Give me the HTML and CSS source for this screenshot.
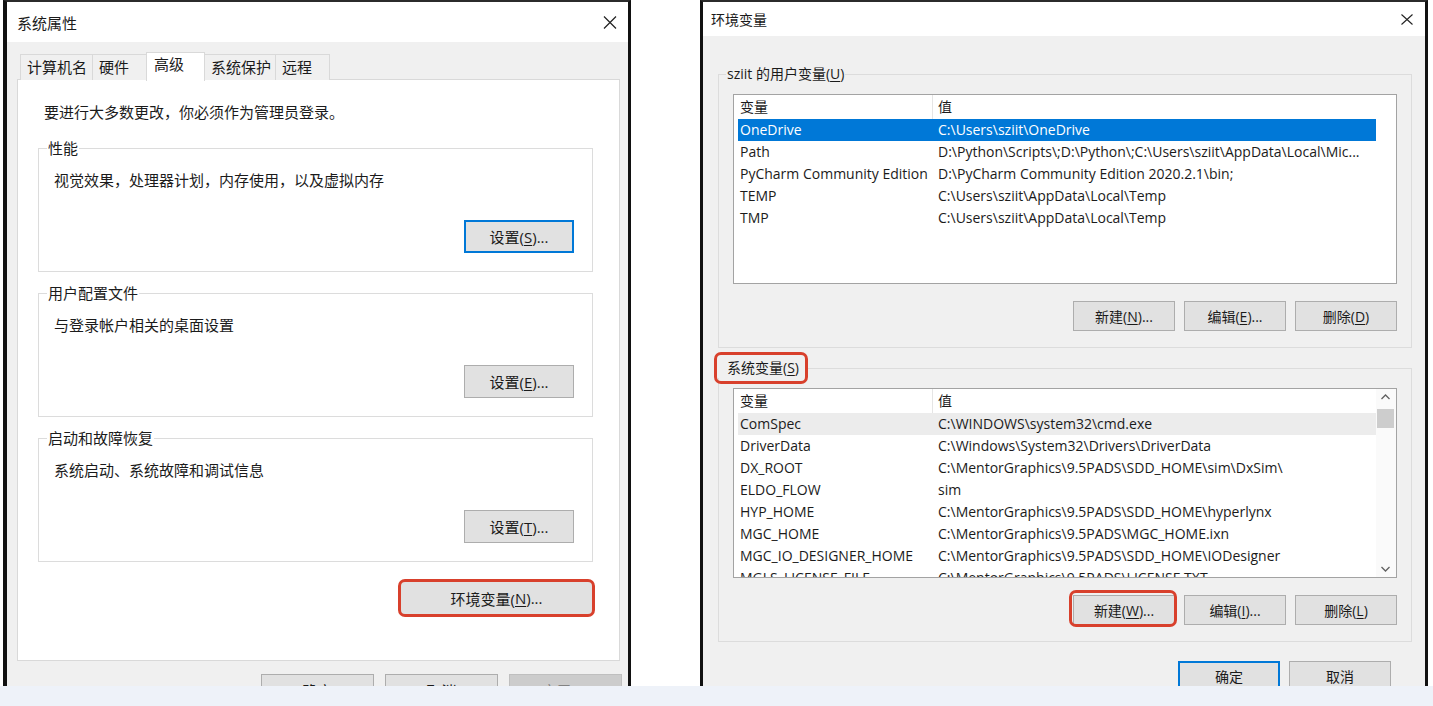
FILE: index.html
```html
<!DOCTYPE html>
<html lang="zh-CN">
<head>
<meta charset="utf-8">
<title>系统属性 / 环境变量</title>
<link rel="stylesheet" href="styles.css">
</head>
<body>
<div class="stage">
  <section class="dlg dlg-sys">
    <header class="titlebar">
      <span class="title">系统属性</span>
      <svg class="close" width="14" height="13" viewBox="0 0 14 13"><path d="M1 0.5 L13 12.5 M13 0.5 L1 12.5" stroke="#222" stroke-width="1.2" fill="none"/></svg>
    </header>
    <div class="body">
      <div class="tabs">
        <span class="tab">计算机名</span>
        <span class="tab">硬件</span>
        <span class="tab tab-on">高级</span>
        <span class="tab">系统保护</span>
        <span class="tab">远程</span>
      </div>
      <div class="panel">
        <p class="msg">要进行大多数更改，你必须作为管理员登录。</p>
        <fieldset class="grp">
          <legend>性能</legend>
          <p class="desc">视觉效果，处理器计划，内存使用，以及虚拟内存</p>
          <div class="grp-actions"><button class="btn btn-set btn-focus">设置(<u>S</u>)...</button></div>
        </fieldset>
        <fieldset class="grp">
          <legend>用户配置文件</legend>
          <p class="desc">与登录帐户相关的桌面设置</p>
          <div class="grp-actions"><button class="btn btn-set">设置(<u>E</u>)...</button></div>
        </fieldset>
        <fieldset class="grp">
          <legend>启动和故障恢复</legend>
          <p class="desc">系统启动、系统故障和调试信息</p>
          <div class="grp-actions"><button class="btn btn-set">设置(<u>T</u>)...</button></div>
        </fieldset>
        <div class="env-row">
          <button class="btn btn-env hl hl-env">环境变量(<u>N</u>)...</button>
        </div>
      </div>
      <div class="footer footer-sys">
        <button class="btn btn-foot">确定</button>
        <button class="btn btn-foot">取消</button>
        <button class="btn btn-foot btn-disabled">应用(<u>A</u>)</button>
      </div>
    </div>
  </section>

  <section class="dlg dlg-env">
    <header class="titlebar">
      <span class="title">环境变量</span>
      <svg class="close" width="12" height="11" viewBox="0 0 12 11"><path d="M0.5 0.5 L11.5 10.5 M11.5 0.5 L0.5 10.5" stroke="#222" stroke-width="1.1" fill="none"/></svg>
    </header>
    <div class="body body-env">
      <fieldset class="egrp">
        <legend>sziit 的用户变量(<u>U</u>)</legend>
        <div class="list">
          <div class="list-main">
            <div class="lrow lhead"><span class="c1">变量</span><span class="c2">值</span></div>
            <div class="lrow sel"><span class="c1">OneDrive</span><span class="c2">C:\Users\sziit\OneDrive</span></div>
            <div class="lrow"><span class="c1">Path</span><span class="c2">D:\Python\Scripts\;D:\Python\;C:\Users\sziit\AppData\Local\Mic...</span></div>
            <div class="lrow"><span class="c1">PyCharm Community Edition</span><span class="c2">D:\PyCharm Community Edition 2020.2.1\bin;</span></div>
            <div class="lrow"><span class="c1">TEMP</span><span class="c2">C:\Users\sziit\AppData\Local\Temp</span></div>
            <div class="lrow"><span class="c1">TMP</span><span class="c2">C:\Users\sziit\AppData\Local\Temp</span></div>
          </div>
          <div class="vscroll vscroll-empty"></div>
        </div>
        <div class="egrp-actions">
          <button class="btn btn-e">新建(<u>N</u>)...</button>
          <button class="btn btn-e">编辑(<u>E</u>)...</button>
          <button class="btn btn-e">删除(<u>D</u>)</button>
        </div>
      </fieldset>

      <fieldset class="egrp egrp-sys">
        <legend class="hl hl-legend">系统变量(<u>S</u>)</legend>
        <div class="list">
          <div class="list-main">
            <div class="lrow lhead"><span class="c1">变量</span><span class="c2">值</span></div>
            <div class="lrow hov"><span class="c1">ComSpec</span><span class="c2">C:\WINDOWS\system32\cmd.exe</span></div>
            <div class="lrow"><span class="c1">DriverData</span><span class="c2">C:\Windows\System32\Drivers\DriverData</span></div>
            <div class="lrow"><span class="c1">DX_ROOT</span><span class="c2">C:\MentorGraphics\9.5PADS\SDD_HOME\sim\DxSim\</span></div>
            <div class="lrow"><span class="c1">ELDO_FLOW</span><span class="c2">sim</span></div>
            <div class="lrow"><span class="c1">HYP_HOME</span><span class="c2">C:\MentorGraphics\9.5PADS\SDD_HOME\hyperlynx</span></div>
            <div class="lrow"><span class="c1">MGC_HOME</span><span class="c2">C:\MentorGraphics\9.5PADS\MGC_HOME.ixn</span></div>
            <div class="lrow"><span class="c1">MGC_IO_DESIGNER_HOME</span><span class="c2">C:\MentorGraphics\9.5PADS\SDD_HOME\IODesigner</span></div>
            <div class="lrow"><span class="c1">MGLS_LICENSE_FILE</span><span class="c2">C:\MentorGraphics\9.5PADS\LICENSE.TXT</span></div>
          </div>
          <div class="vscroll">
            <svg class="arrow" width="19" height="17" viewBox="0 0 19 17"><path d="M5.5 10 L9.5 6 L13.5 10" stroke="#606060" stroke-width="1.3" fill="none"/></svg>
            <div class="thumb"></div>
            <div class="track"></div>
            <svg class="arrow" width="19" height="17" viewBox="0 0 19 17"><path d="M5.5 7 L9.5 11 L13.5 7" stroke="#606060" stroke-width="1.3" fill="none"/></svg>
          </div>
        </div>
        <div class="egrp-actions">
          <button class="btn btn-e hl hl-new">新建(<u>W</u>)...</button>
          <button class="btn btn-e">编辑(<u>I</u>)...</button>
          <button class="btn btn-e">删除(<u>L</u>)</button>
        </div>
      </fieldset>

      <div class="footer footer-env">
        <button class="btn btn-e btn-focus">确定</button>
        <button class="btn btn-e">取消</button>
      </div>
    </div>
  </section>
</div>
<div class="band"></div>
</body>
</html>
```

FILE: styles.css
```css
* { box-sizing: border-box; }
html, body { margin: 0; padding: 0; }
body {
  width: 1433px;
  height: 706px;
  overflow: hidden;
  background: #ffffff;
  font-family: "Open Sans", "Noto Sans CJK SC", sans-serif;
  color: #1b1b1b;
}
p { margin: 0; }
u { text-underline-offset: 2px; }

.stage {
  display: flex;
  align-items: flex-start;
  height: 686px;
  overflow: hidden;
}
.band { height: 20px; background: #eef2f9; }

/* ---------- dialogs ---------- */
.dlg {
  flex: none;
  display: flex;
  flex-direction: column;
  height: 720px;
  background: #f0f0f0;
  border-top: 2px solid #2b2b2b;
}
.dlg-sys {
  width: 628px;
  margin-left: 3px;
  border-left: 4px solid #111;
  border-right: 3px solid #111;
}
.dlg-env {
  width: 728px;
  margin-left: 69px;
  border-left: 3px solid #111;
  border-right: 3px solid #111;
}
.titlebar {
  flex: none;
  display: flex;
  align-items: center;
  justify-content: space-between;
  background: #fff;
}
.dlg-sys .titlebar { height: 40px; padding: 0 11px 0 10px; font-size: 15px; }
.dlg-env .titlebar { height: 34px; padding: 0 12px 0 8px; font-size: 14px; }
.close { display: block; }

/* ---------- 系统属性 ---------- */
.dlg-sys .body { padding: 10px 8px 0 10px; font-size: 15px; }
.tabs {
  display: grid;
  grid-template-columns: 72px 55px 57px 71px 54px;
  align-items: end;
  height: 27px;
  margin-left: 3px;
}
.tab {
  height: 26px;
  line-height: 24px;
  padding-left: 6px;
  margin-right: -1px;
  background: #f0f0f0;
  border: 1px solid #d9d9d9;
  border-bottom: none;
  white-space: nowrap;
}
.tab-on {
  position: relative;
  z-index: 1;
  height: 29px;
  line-height: 22px;
  margin-bottom: -1px;
  padding-left: 7px;
  background: #fff;
  margin-left: -1px;
}
.panel {
  height: 582px;
  background: #fff;
  border: 1px solid #d9d9d9;
  display: flex;
  flex-direction: column;
}
.msg { margin: 22px 0 0 26px; line-height: 20px; }
.grp {
  margin: 16px 26px 0 20px;
  padding: 0 18px 18px 15px;
  border: 1px solid #dcdcdc;
  min-inline-size: 0;
}
.grp + .grp { margin-top: 11px; }
.grp legend {
  padding: 0 1px;
  margin-left: -7px;
  line-height: 20px;
}
.desc { margin-top: 12px; line-height: 20px; }
.grp-actions { display: flex; justify-content: flex-end; margin-top: 30px; }

.btn {
  font-family: inherit;
  color: #1b1b1b;
  background: #e1e1e1;
  border: 1px solid #adadad;
  padding: 0;
  display: flex;
  align-items: center;
  justify-content: center;
  white-space: nowrap;
}
.btn-set { width: 110px; height: 33px; font-size: 15px; }
.btn-focus { border: 2px solid #0078d7; }
.env-row { display: flex; justify-content: flex-end; margin: 19px 26px 0 0; }
.btn-env { width: 193px; height: 34px; font-size: 15px; }

.footer-sys {
  display: flex;
  justify-content: flex-end;
  gap: 11px;
  margin: 13px -2px 0 0;
}
.btn-foot { width: 113px; height: 33px; font-size: 15px; }
.btn-disabled { background: #cccccc; border-color: #bfbfbf; color: #838383; }

/* highlight rings (annotation overlay) */
.hl { position: relative; }
.hl::after {
  content: "";
  position: absolute;
  border: 3px solid #d8402c;
  border-radius: 7px;
  pointer-events: none;
}
.hl-env::after { inset: -3px; }
.hl-new::after { inset: -6px -3px -3px -5px; }
.hl-legend::after { inset: -6px 0 -6px -1px; }

/* ---------- 环境变量 ---------- */
.body-env {
  padding: 28px 13px 0 15px;
  font-size: 14px;
  display: flex;
  flex-direction: column;
}
.egrp {
  margin: 0;
  padding: 0 14px 16px 14px;
  border: 1px solid #dcdcdc;
  min-inline-size: 0;
}
.egrp legend {
  padding: 0 1px;
  margin-left: -7px;
  line-height: 20px;
}
.egrp-sys { margin-top: 10px; }
.egrp-sys legend.hl-legend {
  padding: 0 9px 0 12px;
  margin-left: -18px;
}
.list {
  margin-top: 10px;
  height: 190px;
  background: #fff;
  border: 1px solid #a3a3a3;
  display: flex;
  overflow: hidden;
}
.list-main { flex: 1; min-width: 0; overflow: hidden; }
.lrow {
  display: grid;
  grid-template-columns: 195px 1fr;
  height: 22px;
  line-height: 22px;
  margin-left: 4px;
  white-space: nowrap;
}
.lrow .c1 { padding-left: 2px; overflow: hidden; }
.lrow .c2 { padding-left: 5px; overflow: hidden; }
.lhead { height: 24px; line-height: 24px; }
.lhead .c1 { border-right: 1px solid #e5e5e5; }
.sel { background: #0078d7; color: #fff; }
.hov { background: #ececec; }

.vscroll {
  flex: none;
  width: 20px;
  display: flex;
  flex-direction: column;
  background: #fafafa;
}
.vscroll-empty { background: #fff; }
.arrow { display: block; flex: none; }
.thumb { flex: none; height: 19px; margin: 3px 2px 0 1px; background: #cdcdcd; }
.track { flex: 1; }

.egrp-actions {
  display: flex;
  justify-content: flex-end;
  gap: 9px;
  margin-top: 17px;
}
.btn-e { width: 102px; height: 30px; font-size: 14px; }
.footer-env {
  display: flex;
  justify-content: flex-end;
  gap: 9px;
  margin-top: 19px;
  padding-right: 21px;
}
```
